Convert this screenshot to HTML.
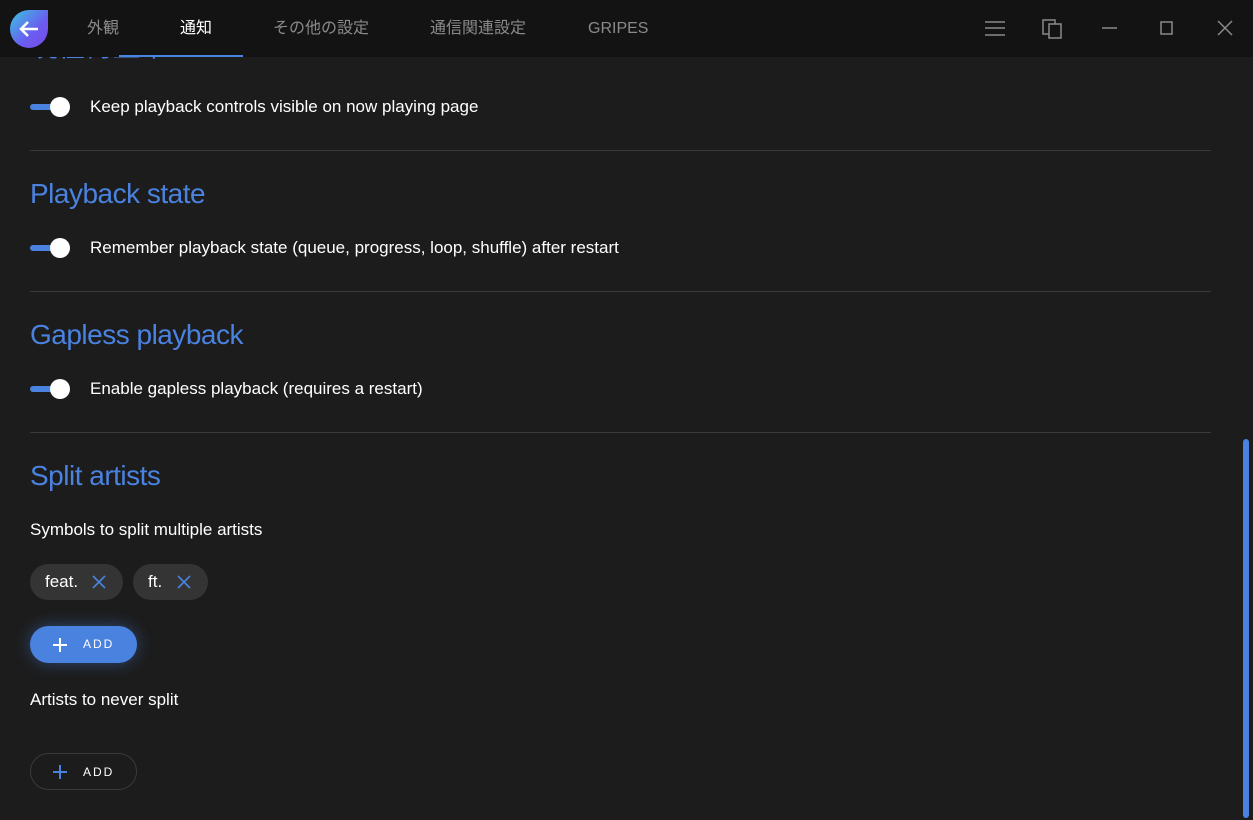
<!DOCTYPE html>
<html><head><meta charset="utf-8"><style>
*{margin:0;padding:0;box-sizing:border-box}
body{width:1253px;height:820px;background:#1c1c1c;font-family:"Liberation Sans","Noto Sans CJK JP",sans-serif;color:#fff;position:relative;overflow:hidden}
.hdr{position:absolute;left:0;top:0;width:1253px;height:57px;background:#131313;z-index:2}
.tab{position:absolute;top:21px;font-size:16px;line-height:16px;height:16px;color:#8a8a8a}
.logo{position:absolute;left:10px;top:10px;width:38px;height:38px;border-radius:19px 0 19px 19px;background:linear-gradient(135deg,#39c6e0,#6a5cf0 60%,#7a4be8)}
h2{position:absolute;left:30px;font-size:28px;font-weight:normal;color:#4a82e0;letter-spacing:-0.5px;line-height:34px}
.row{position:absolute;left:90px;font-size:17px;line-height:20px;color:#fff}
.tog{position:absolute;left:30px;width:40px;height:20px}
.tog .t{position:absolute;left:0;top:7px;width:34px;height:6px;border-radius:3px;background:#4a82e0}
.tog .k{position:absolute;left:20px;top:0;width:20px;height:20px;border-radius:50%;background:#fff}
.hr{position:absolute;left:30px;width:1181px;height:1px;background:#3a3a3a}
.chip{position:absolute;top:564px;height:36px;border-radius:18px;background:#343434;font-size:17px;line-height:36px;padding-left:15px}
.chip svg{position:absolute;top:11px}
.btn{position:absolute;left:30px;width:107px;height:37px;border-radius:19px;font-size:12px;letter-spacing:2px;line-height:37px}
.btn svg{position:absolute;left:22px;top:11px}
</style></head><body>
<div class="hdr">
<div class="logo"><svg width="38" height="38" viewBox="0 0 38 38"><path d="M28 19H11M18 12l-7 7 7 7" stroke="#fff" stroke-width="2.5" fill="none"/></svg></div>
<div class="tab" style="left:87px">外観</div>
<div class="tab" style="left:180px;color:#fff">通知</div>
<div style="position:absolute;left:119px;top:55px;width:124px;height:2px;background:#4a82e0"></div>
<div class="tab" style="left:273px">その他の設定</div>
<div class="tab" style="left:430px">通信関連設定</div>
<div class="tab" style="left:588px">GRIPES</div>
<svg style="position:absolute;left:960px;top:0" width="293" height="57" stroke="#8a8a8a" stroke-width="1.5" fill="none">
<path d="M25 22h20M25 28h20M25 35h20"/>
<rect x="83" y="20" width="12" height="14"/><rect x="89" y="24" width="12" height="14" fill="#131313"/>
<path d="M142 28h15"/><rect x="201" y="22" width="11" height="12"/>
<path d="M258 21l14 14M272 21l-14 14"/>
</svg>
</div>
<h2 style="top:30px">現在再生中</h2>
<div class="tog" style="top:97px"><div class="t"></div><div class="k"></div></div>
<div class="row" style="top:97px">Keep playback controls visible on now playing page</div>
<div class="hr" style="top:150px"></div>
<h2 style="top:177px">Playback state</h2>
<div class="tog" style="top:238px"><div class="t"></div><div class="k"></div></div>
<div class="row" style="top:238px">Remember playback state (queue, progress, loop, shuffle) after restart</div>
<div class="hr" style="top:291px"></div>
<h2 style="top:318px">Gapless playback</h2>
<div class="tog" style="top:379px"><div class="t"></div><div class="k"></div></div>
<div class="row" style="top:379px">Enable gapless playback (requires a restart)</div>
<div class="hr" style="top:432px"></div>
<h2 style="top:459px">Split artists</h2>
<div class="row" style="left:30px;top:520px">Symbols to split multiple artists</div>
<div class="chip" style="left:30px;width:93px">feat.<svg style="left:62px" width="14" height="14" stroke="#4a82e0" stroke-width="1.6"><path d="M1 1l12 12M13 1L1 13"/></svg></div>
<div class="chip" style="left:133px;width:75px">ft.<svg style="left:44px" width="14" height="14" stroke="#4a82e0" stroke-width="1.6"><path d="M1 1l12 12M13 1L1 13"/></svg></div>
<div class="btn" style="top:626px;background:#4a82e0;box-shadow:0 0 16px rgba(74,130,224,.45)"><svg width="16" height="16" stroke="#fff" stroke-width="2"><path d="M8 1v14M1 8h14"/></svg><span style="position:absolute;left:53px">ADD</span></div>
<div class="row" style="left:30px;top:690px">Artists to never split</div>
<div class="btn" style="top:753px;border:1px solid #3a3a3a"><svg width="16" height="16" stroke="#4a82e0" stroke-width="2" style="left:21px;top:10px"><path d="M8 1v14M1 8h14"/></svg><span style="position:absolute;left:52px">ADD</span></div>
<div style="position:absolute;left:1243px;top:439px;width:6px;height:379px;border-radius:3px;background:#4a82e0"></div>
</body></html>
